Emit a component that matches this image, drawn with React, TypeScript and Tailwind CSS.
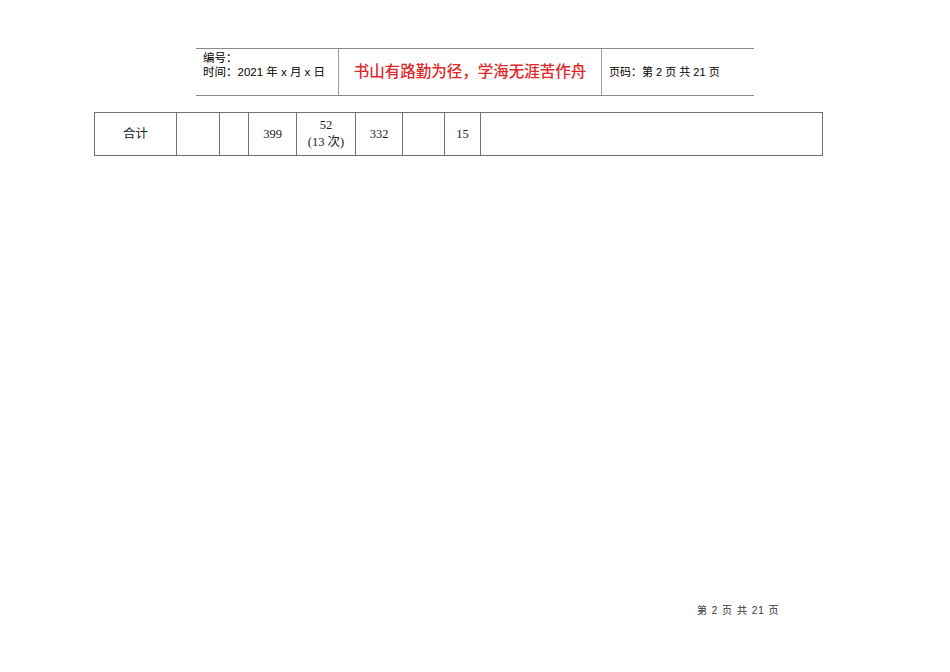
import React from 'react';

const sans = { fontFamily: '"Liberation Sans", "Noto Sans CJK SC", sans-serif' };

const cells: { w: string; lines: string[] }[] = [
  { w: 'w-[82px]', lines: ['合计'] },
  { w: 'w-[43px]', lines: [] },
  { w: 'w-[29px]', lines: [] },
  { w: 'w-[48px]', lines: ['399'] },
  { w: 'w-[59px]', lines: ['52', '(13 次)'] },
  { w: 'w-[47px]', lines: ['332'] },
  { w: 'w-[42px]', lines: [] },
  { w: 'w-[36px]', lines: ['15'] },
  { w: 'w-[342px]', lines: [] },
];

const App: React.FC = () => {
  return (
    <div className="flex h-[672px] w-[950px] flex-col bg-white text-black">
      {/* page header */}
      <div
        className="ml-[196px] mt-[48px] flex h-[48px] w-[558px] border-y border-[#8a8a8a] text-[11.5px]"
        style={sans}
      >
        <div className="flex w-[142px] flex-col pl-[7px] pt-[2px] leading-[14px]">
          <span>编号：</span>
          <span>时间：2021 年 x 月 x 日</span>
        </div>
        <div className="flex w-[264px] items-center justify-center border-x border-[#a0a0a0] text-[15.5px] font-medium text-[#e0282a]">
          书山有路勤为径，学海无涯苦作舟
        </div>
        <div className="flex flex-1 items-center pl-[7px] text-[11px]">页码：第 2 页 共 21 页</div>
      </div>

      {/* totals row */}
      <div
        className="ml-[94px] mt-[16px] flex h-[44px] w-fit border-y border-l border-[#707070] text-[12.5px] text-[#222]"
        style={{ fontFamily: '"Liberation Serif", "Noto Sans CJK SC", serif' }}
      >
        {cells.map((c, i) => (
          <div
            key={i}
            className={`${c.w} flex flex-col items-center justify-center border-r border-[#707070] leading-[17px]`}
            style={i === 0 ? sans : undefined}
          >
            {c.lines.map((l) => (
              <span key={l}>{l}</span>
            ))}
          </div>
        ))}
      </div>

      {/* page footer */}
      <div className="ml-[697px] mt-[447px] text-[10px] tracking-[1px] text-[#333]" style={sans}>
        第 2 页 共 21 页
      </div>
    </div>
  );
};

export default App;
